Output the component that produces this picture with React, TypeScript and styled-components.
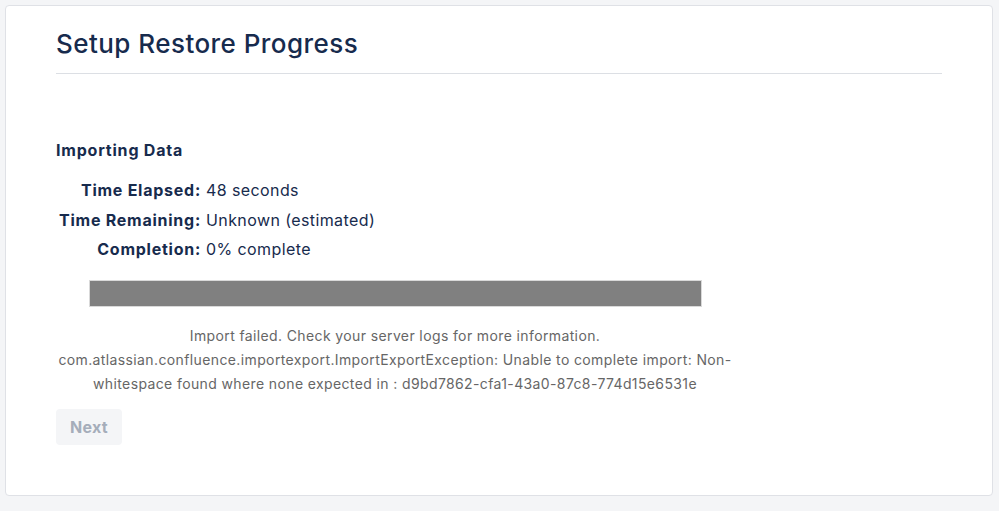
import styled, { createGlobalStyle } from "styled-components"

const GlobalStyle = createGlobalStyle`
    html, body {
        margin: 0;
        padding: 0;
        background-color: #f4f5f7;
        font-family: Inter, "Noto Sans", "Liberation Sans", sans-serif;
        color: #172b4d;
    }
`

type StatType = {
    label: string,
    value: string
}

const stats: Array<StatType> = [
    { label: "Time Elapsed:", value: "48 seconds" },
    { label: "Time Remaining:", value: "Unknown (estimated)" },
    { label: "Completion:", value: "0% complete" },
]

export default function App() {
    return (
        <>
            <GlobalStyle />
            <Page>
                <Card>
                    <Header>
                        <Title>Setup Restore Progress</Title>
                    </Header>
                    <SectionTitle>Importing Data</SectionTitle>
                    <StatsTable>
                        {stats.map((s) => (
                            <StatRow key={s.label}>
                                <StatLabel>{s.label}</StatLabel>
                                <StatValue>{s.value}</StatValue>
                            </StatRow>
                        ))}
                    </StatsTable>
                    <ProgressArea>
                        <ProgressBar>
                            <ProgressFill style={{ width: "100%" }} />
                        </ProgressBar>
                        <ErrorMessage>
                            Import failed. Check your server logs for more information.
                            <br />
                            com.atlassian.confluence.importexport.ImportExportException: Unable to complete import: Non-whitespace found where none expected in : d9bd7862-cfa1-43a0-87c8-774d15e6531e
                        </ErrorMessage>
                    </ProgressArea>
                    <NextButton disabled>Next</NextButton>
                </Card>
            </Page>
        </>
    )
}

const Page = styled.div`
    padding: 5px 6px 16px 5px;
    box-sizing: border-box;
    width: 999px;
    height: 511px;
`

const Card = styled.div`
    box-sizing: border-box;
    height: 491px;
    background-color: #ffffff;
    border: 1px solid #dfe1e6;
    border-radius: 4px;
    padding: 23px 50px 0 50px;
`

const Header = styled.div`
    padding-bottom: 14px;
    border-bottom: 1px solid #dcdfe4;
`

const Title = styled.h1`
    margin: 0;
    font-size: 26px;
    line-height: 30px;
    font-weight: 500;
    letter-spacing: 0.45px;
    color: #172b4d;
`

const SectionTitle = styled.h3`
    margin: 66px 0 0 0;
    font-size: 16px;
    line-height: 20px;
    font-weight: 700;
    letter-spacing: 0.8px;
    color: #172b4d;
`

const StatsTable = styled.div`
    display: grid;
    grid-template-columns: 150px auto;
    margin-top: 16px;
    width: max-content;
`

const StatRow = styled.div`
    display: contents;
`

const StatLabel = styled.span`
    text-align: right;
    font-weight: 700;
    font-size: 16px;
    line-height: 29.5px;
    letter-spacing: 0.75px;
    padding-right: 5px;
    white-space: nowrap;
`

const StatValue = styled.span`
    font-size: 16px;
    line-height: 29.5px;
    letter-spacing: 0.4px;
    white-space: nowrap;
`

const ProgressArea = styled.div`
    width: 678px;
    margin-top: 15px;
    display: flex;
    flex-direction: column;
    align-items: center;
`

const ProgressBar = styled.div`
    box-sizing: border-box;
    width: 613px;
    height: 27px;
    border: 1px solid #d9d9d9;
    background-color: #ffffff;
`

const ProgressFill = styled.div`
    height: 100%;
    background-color: #808080;
`

const ErrorMessage = styled.p`
    margin: 17px 0 0 0;
    text-align: center;
    font-size: 14px;
    line-height: 24px;
    letter-spacing: 0.38px;
    color: #666666;
`

const NextButton = styled.button`
    margin-top: 13px;
    width: 66px;
    height: 36px;
    border: none;
    border-radius: 4px;
    background-color: #f4f5f7;
    color: #a5adba;
    font-family: inherit;
    font-size: 16px;
    font-weight: 700;
    letter-spacing: 0.3px;
    cursor: not-allowed;
`
